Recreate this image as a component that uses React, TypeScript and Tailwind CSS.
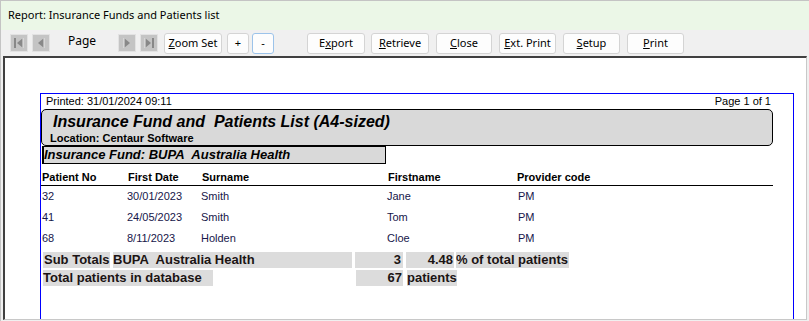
import React from "react";

const ui = { fontFamily: '"Noto Sans", "Open Sans", sans-serif' };
const arial = { fontFamily: '"Liberation Sans", Arial, sans-serif' };

function NavIcon({ dir, bar }: { dir: "left" | "right"; bar?: boolean }) {
  return (
    <div className="w-[18px] h-[18px] bg-[#c4c4c4] border border-[#e2e2e2] flex items-center justify-center">
      <svg width="14" height="14" viewBox="0 0 14 14">
        {dir === "left" ? (
          <>
            {bar && <rect x="2" y="2" width="2" height="10" fill="#888888" />}
            <polygon points={bar ? "11,2 11,12 5,7" : "10,2 10,12 4,7"} fill="#888888" />
            <line x1={bar ? 11 : 10} y1="2" x2={bar ? 11 : 10} y2="12" stroke="#e8e8e8" strokeWidth="1" />
          </>
        ) : (
          <>
            {bar && <rect x="10" y="2" width="2" height="10" fill="#888888" />}
            <polygon points={bar ? "3,2 3,12 9,7" : "4,2 4,12 10,7"} fill="#888888" />
            <line x1={bar ? 3 : 4} y1="2" x2={bar ? 3 : 4} y2="12" stroke="#e8e8e8" strokeWidth="1" />
          </>
        )}
      </svg>
    </div>
  );
}

function Btn({
  w,
  ml,
  children,
  focus,
}: {
  w: string;
  ml: string;
  children: React.ReactNode;
  focus?: boolean;
}) {
  return (
    <div
      className={`${w} ${ml} h-[21px] rounded-[3px] border ${
        focus ? "border-[#9cc3ea]" : "border-[#d4d4d4]"
      } bg-[#fdfdfd] flex items-center justify-center text-[11px] text-black whitespace-nowrap`}
      style={ui}
    >
      {children}
    </div>
  );
}

const rows = [
  ["32", "30/01/2023", "Smith", "Jane", "PM"],
  ["41", "24/05/2023", "Smith", "Tom", "PM"],
  ["68", "8/11/2023", "Holden", "Cloe", "PM"],
];

export default function App() {
  return (
    <div className="w-[809px] h-[321px] bg-[#f0f0f0] overflow-hidden flex flex-col border-t border-l border-[#c4c4c4]">
      <div
        className="h-[29px] shrink-0 bg-[#ebf7e7] flex items-center pl-[7px] text-[11px] text-black"
        style={ui}
      >
        Report: Insurance Funds and Patients list
      </div>
      <div className="h-[26px] shrink-0 flex items-center pl-[9px]">
        <NavIcon dir="left" bar />
        <div className="ml-[4px]">
          <NavIcon dir="left" />
        </div>
        <div className="ml-[18px] w-[50px] text-[12px] text-black -mt-[4px]" style={ui}>
          Page
        </div>
        <NavIcon dir="right" />
        <div className="ml-[4px]">
          <NavIcon dir="right" bar />
        </div>
        <Btn w="w-[58px]" ml="ml-[6px]">
          <span>
            <u>Z</u>oom Set
          </span>
        </Btn>
        <Btn w="w-[22px]" ml="ml-[5px]">
          +
        </Btn>
        <Btn w="w-[22px]" ml="ml-[3px]" focus>
          -
        </Btn>
        <Btn w="w-[58px]" ml="ml-[33px]">
          <span>
            E<u>x</u>port
          </span>
        </Btn>
        <Btn w="w-[58px]" ml="ml-[6px]">
          <span>
            <u>R</u>etrieve
          </span>
        </Btn>
        <Btn w="w-[56px]" ml="ml-[7px]">
          <span>
            <u>C</u>lose
          </span>
        </Btn>
        <Btn w="w-[57px]" ml="ml-[7px]">
          <span>
            <u>E</u>xt. Print
          </span>
        </Btn>
        <Btn w="w-[57px]" ml="ml-[7px]">
          <span>
            <u>S</u>etup
          </span>
        </Btn>
        <Btn w="w-[57px]" ml="ml-[7px]">
          <span>
            <u>P</u>rint
          </span>
        </Btn>
      </div>
      <div className="ml-[2px] w-[804px] h-[264px] shrink-0 bg-white border-t-2 border-l-2 border-[#404040] border-r border-r-[#c8c8c8] border-b border-b-[#c8c8c8] pl-[35px] pt-[35px] flex flex-col">
        <div className="w-[754px] flex-1 border border-b-0 border-[#0000ff] flex flex-col" style={arial}>
          <div className="h-[15px] flex justify-between items-center pl-[5px] pr-[22px] text-[11px] leading-[15px] text-black">
            <span>Printed: 31/01/2024 09:11</span>
            <span>Page 1 of 1</span>
          </div>
          <div className="w-[732px] h-[37px] bg-[#d9d9d9] border border-black rounded-[5px] flex flex-col">
            <div className="pl-[11px] text-[16px] leading-[20px] font-bold italic text-black pt-[2px]">
              Insurance Fund and&nbsp; Patients List (A4-sized)
            </div>
            <div className="pl-[8px] text-[11px] leading-[13px] font-bold text-black">
              Location: Centaur Software
            </div>
          </div>
          <div className="ml-[1px] w-[344px] h-[18px] bg-[#d9d9d9] border border-black border-l-2 flex items-center text-[13px] font-bold italic text-black whitespace-nowrap">
            Insurance Fund: BUPA&nbsp; Australia Health
          </div>
          <div className="mt-[5px] w-[732px] h-[17px] border-b border-black grid grid-cols-[86px_74px_186px_129px_1fr] pl-[1px] text-[11px] font-bold leading-[16px] text-black">
            <span>Patient No</span>
            <span>First Date</span>
            <span>Surname</span>
            <span>Firstname</span>
            <span>Provider code</span>
          </div>
          {rows.map((r) => (
            <div
              key={r[0]}
              className="w-[732px] h-[21px] grid grid-cols-[86px_74px_186px_129px_1fr] text-[11px] leading-[21px] text-[#16164a]"
            >
              <span className="pl-[1px]">{r[0]}</span>
              <span>{r[1]}</span>
              <span>{r[2]}</span>
              <span>{r[3]}</span>
              <span className="pl-[2px]">{r[4]}</span>
            </div>
          ))}
          <div className="mt-[3px] h-[16px] flex text-[13px] font-bold leading-[16px] text-[#1b1414] whitespace-nowrap">
            <div className="ml-[2px] w-[67px] bg-[#dcdcdc] pl-[1px] overflow-hidden">Sub Totals</div>
            <div className="ml-[3px] w-[239px] bg-[#dcdcdc]">BUPA&nbsp; Australia Health</div>
            <div className="ml-[3px] w-[48px] bg-[#dcdcdc] text-right pr-[2px]">3</div>
            <div className="ml-[3px] w-[48px] bg-[#dcdcdc] text-right pr-[1px]">4.48</div>
            <div className="ml-[2px] w-[113px] bg-[#dcdcdc]">% of total patients</div>
          </div>
          <div className="mt-[2px] h-[16px] flex text-[13px] font-bold leading-[16px] text-[#1b1414] whitespace-nowrap">
            <div className="ml-[2px] w-[170px] bg-[#dcdcdc]">Total patients in database</div>
            <div className="ml-[143px] w-[47px] bg-[#dcdcdc] text-right pr-[1px]">67</div>
            <div className="ml-[4px] w-[50px] bg-[#dcdcdc]">patients</div>
          </div>
        </div>
      </div>
    </div>
  );
}
